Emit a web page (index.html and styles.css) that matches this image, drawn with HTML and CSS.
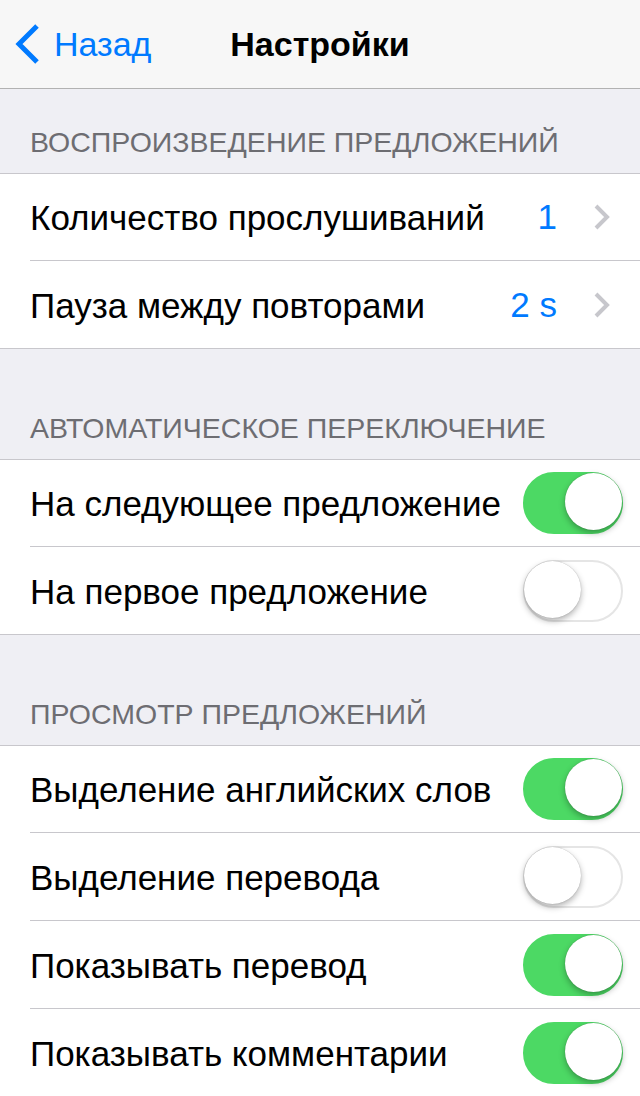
FILE: index.html
```html
<!DOCTYPE html>
<html lang="ru">
<head>
    <meta charset="UTF-8">
    <meta name="viewport" content="width=device-width, initial-scale=1.0">
    <title>Настройки</title>
    <link rel="stylesheet" href="styles.css">
</head>
<body>
    <div class="navbar">
        <a class="back" href="#">
            <svg class="back-icon" width="28" height="40" viewBox="0 0 28 40">
                <path d="M24 2 L6 20 L24 38" fill="none" stroke="#007aff" stroke-width="5"/>
            </svg>
            <span>Назад</span>
        </a>
        <div class="title">Настройки</div>
    </div>

    <div class="section-header first">Воспроизведение предложений</div>
    <div class="group">
        <div class="row">
            <span class="label">Количество прослушиваний</span>
            <span class="value">1</span>
            <svg class="chevron" width="18" height="26" viewBox="0 0 18 26">
                <path d="M3 2 L14 13 L3 24" fill="none" stroke="#c7c7cc" stroke-width="4"/>
            </svg>
        </div>
        <div class="row">
            <span class="label">Пауза между повторами</span>
            <span class="value">2 s</span>
            <svg class="chevron" width="18" height="26" viewBox="0 0 18 26">
                <path d="M3 2 L14 13 L3 24" fill="none" stroke="#c7c7cc" stroke-width="4"/>
            </svg>
        </div>
    </div>

    <div class="section-header">Автоматическое переключение</div>
    <div class="group">
        <div class="row">
            <span class="label">На следующее предложение</span>
            <span class="switch on"><span class="knob"></span></span>
        </div>
        <div class="row">
            <span class="label">На первое предложение</span>
            <span class="switch"><span class="knob"></span></span>
        </div>
    </div>

    <div class="section-header">Просмотр предложений</div>
    <div class="group">
        <div class="row">
            <span class="label">Выделение английских слов</span>
            <span class="switch on"><span class="knob"></span></span>
        </div>
        <div class="row">
            <span class="label">Выделение перевода</span>
            <span class="switch"><span class="knob"></span></span>
        </div>
        <div class="row">
            <span class="label">Показывать перевод</span>
            <span class="switch on"><span class="knob"></span></span>
        </div>
        <div class="row">
            <span class="label">Показывать комментарии</span>
            <span class="switch on"><span class="knob"></span></span>
        </div>
    </div>
</body>
</html>
```

FILE: styles.css
```css
body {
    margin: 0;
    background-color: #efeff4;
    font-family: "Liberation Sans", Arial, sans-serif;
    color: #000;
}
.navbar {
    height: 88px;
    background-color: #f7f7f7;
    border-bottom: 1px solid #b2b2b2;
    display: flex;
    align-items: center;
    position: relative;
}
.back {
    display: flex;
    align-items: center;
    color: #007aff;
    text-decoration: none;
    font-size: 34px;
    padding-left: 13px;
    height: 100%;
}
.back-icon {
    margin-right: 13px;
}
.title {
    position: absolute;
    left: 0;
    right: 0;
    text-align: center;
    font-size: 34px;
    font-weight: bold;
    pointer-events: none;
}
.section-header {
    padding: 62px 30px 14px;
    font-size: 28.5px;
    color: #6d6d72;
    text-transform: uppercase;
    line-height: 34px;
}
.section-header.first {
    padding-top: 36px;
}
.group {
    background-color: #fff;
    border-top: 1px solid #c8c7cc;
    border-bottom: 1px solid #c8c7cc;
}
.row {
    height: 87px;
    margin-left: 30px;
    padding-right: 16px;
    display: flex;
    align-items: center;
    border-bottom: 1px solid #c8c7cc;
    font-size: 35px;
}
.row:first-child {
    height: 86px;
}
.row:last-child {
    border-bottom: none;
}
.label {
    flex: 1;
    padding-top: 2px;
}
.value {
    color: #007aff;
    margin-right: 36px;
}
.chevron {
    margin-right: 13px;
}
.switch {
    width: 96px;
    height: 58px;
    border: 2px solid #e5e5e5;
    border-radius: 31px;
    background-color: #fff;
    position: relative;
    flex-shrink: 0;
    margin-right: 1px;
}
.switch.on {
    background-color: #4cd964;
    border-color: #4cd964;
}
.knob {
    position: absolute;
    top: -1px;
    left: -1px;
    width: 57px;
    height: 57px;
    border-radius: 50%;
    background-color: #fff;
    box-shadow: 0 3px 6px rgba(0, 0, 0, 0.3), 0 0 1px rgba(0, 0, 0, 0.3);
}
.switch.on .knob {
    left: auto;
    right: -1px;
}
```
